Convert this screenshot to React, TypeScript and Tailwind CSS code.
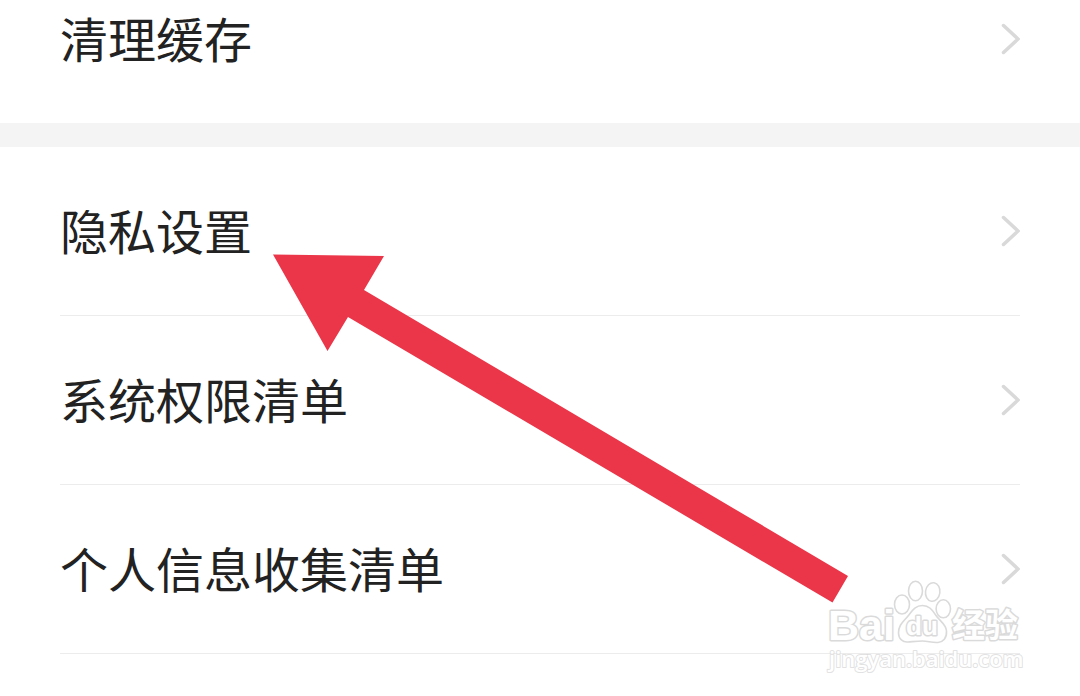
const cacheItems = ['清理缓存'];
const privacyItems = ['隐私设置', '系统权限清单', '个人信息收集清单'];

function Chevron() {
  return (
    <svg className="h-9 w-5 shrink-0" viewBox="0 0 20 36" fill="none" aria-hidden="true">
      <path d="M3.500 4.500 18 18 3.500 31.500" stroke="#d9d9d9" strokeWidth="3.500" strokeLinecap="round" />
    </svg>
  );
}

function RowContent({ label }: { label: string }) {
  return (
    <>
      <span className="pb-1 text-[48px] leading-[72px] text-[#222222]">{label}</span>
      <Chevron />
    </>
  );
}

function Watermark() {
  return (
    <svg
      className="absolute top-[576px] right-[56px] h-[100px] w-[200px]"
      viewBox="824 576 200 100"
      role="img"
      aria-label="Baidu 经验"
      fill="#ffffff"
      stroke="#dadada"
      strokeLinejoin="round"
    >
      <g strokeWidth="1.600">
        <ellipse cx="902" cy="604.500" rx="7.500" ry="9.500" />
        <ellipse cx="915.500" cy="591" rx="7" ry="9.700" />
        <ellipse cx="932.700" cy="592" rx="7.200" ry="9.300" transform="rotate(8 932.700 592)" />
        <ellipse cx="943.300" cy="608.800" rx="7.200" ry="9" />
        <path d="M922.500 605.500C915 605.500 912 611 908 616C903 622 898.500 625 898.500 633C898.500 639 903 642.500 908 642C914 641.500 918 641 922.500 641C928 641 932 643 938 642.500C943 642 947 638 946.500 631C946 624 940 621.500 936 615.500C932 609.500 929 605.500 922.500 605.500Z" />
      </g>
      <g className="font-['Liberation_Sans',sans-serif]" style={{ paintOrder: 'stroke' }}>
        <text x="828" y="640" fontSize="43" strokeWidth="3" className="font-bold">Bai</text>
        <text x="906" y="635" fontSize="26" strokeWidth="3" className="font-bold">du</text>
      </g>
      <text x="952" y="637" fontSize="33" strokeWidth="3" className="font-['Noto_Sans_CJK_SC',sans-serif] font-bold" style={{ paintOrder: 'stroke' }}>经验</text>
      <text x="829" y="667" fontSize="22" strokeWidth="2" strokeOpacity="0.8" className="font-['Open_Sans',sans-serif] font-semibold" style={{ paintOrder: 'stroke' }}>jingyan.baidu.com</text>
    </svg>
  );
}

export default function App() {
  return (
    <main className="relative h-screen overflow-hidden bg-white font-['Noto_Sans_CJK_SC',sans-serif]">
      <section className="px-[60px]">
        {cacheItems.map((label) => (
          <a key={label} href="#" className="flex h-[123px] items-center justify-between pb-[45px]">
            <RowContent label={label} />
          </a>
        ))}
      </section>
      <div className="h-6 bg-[#f4f4f4]" />
      <section className="px-[60px]">
        {privacyItems.map((label) => (
          <a key={label} href="#" className="flex h-[169px] items-center justify-between border-b border-[#ececec]">
            <RowContent label={label} />
          </a>
        ))}
      </section>
      <svg className="absolute top-[254px] left-[272px] h-[350px] w-[578px]" viewBox="272 254 578 350" aria-hidden="true">
        <path fill="#eb3649" d="M273 254.500 384 256 364 290 848 576 832.500 602.500 348 317 327.500 351Z" />
      </svg>
      <Watermark />
    </main>
  );
}
